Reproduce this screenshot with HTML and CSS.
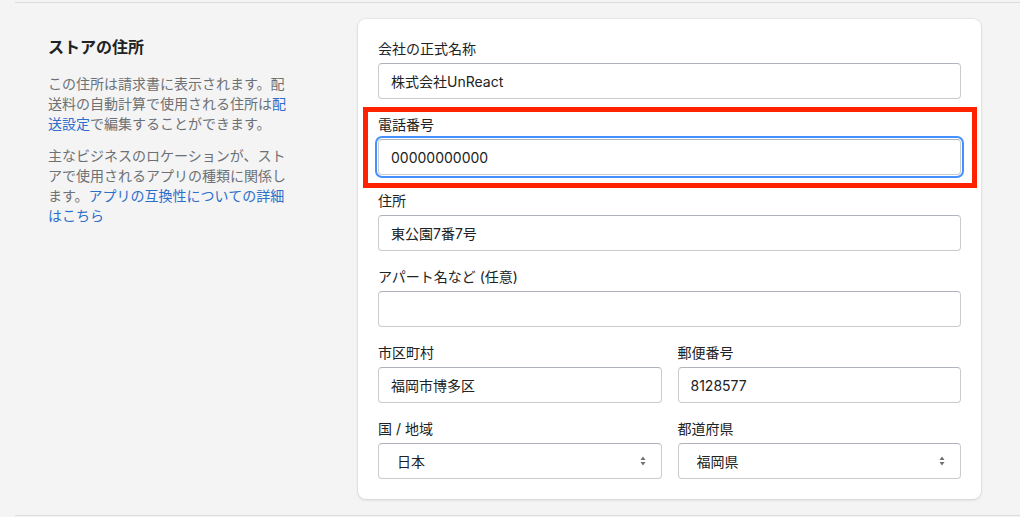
FILE: index.html
```
<!DOCTYPE html>
<html lang="ja">
<head>
    <meta charset="UTF-8">
    <meta name="viewport" content="width=device-width, initial-scale=1.0">
    <title>ストアの住所</title>
    <link rel="stylesheet" href="styles.css">
</head>
<body>
    <div class="section">
        <div class="annotation">
            <h2 class="heading">ストアの住所</h2>
            <p>この住所は請求書に表示されます。配送料の自動計算で使用される住所は<a href="#">配送設定</a>で編集することができます。</p>
            <p>主なビジネスのロケーションが、ストアで使用されるアプリの種類に関係します。<a href="#">アプリの互換性についての詳細はこちら</a></p>
        </div>

        <div class="card">
            <div class="field">
                <label>会社の正式名称</label>
                <input class="input" type="text" value="株式会社UnReact">
            </div>
            <div class="field highlight">
                <label>電話番号</label>
                <input class="input focused" type="text" value="00000000000">
            </div>
            <div class="field">
                <label>住所</label>
                <input class="input" type="text" value="東公園7番7号">
            </div>
            <div class="field">
                <label>アパート名など (任意)</label>
                <input class="input" type="text" value="">
            </div>
            <div class="row">
                <div class="field">
                    <label>市区町村</label>
                    <input class="input" type="text" value="福岡市博多区">
                </div>
                <div class="field">
                    <label>郵便番号</label>
                    <input class="input" type="text" value="8128577">
                </div>
            </div>
            <div class="row">
                <div class="field">
                    <label>国 / 地域</label>
                    <div class="select-wrap">
                        <select class="select">
                            <option>日本</option>
                        </select>
                        <svg class="caret" width="8" height="12" viewBox="0 0 8 12"><path d="M4 1.5 L6.5 5 H1.5 Z M4 10.5 L1.5 7 H6.5 Z" fill="#6d7175"/></svg>
                    </div>
                </div>
                <div class="field">
                    <label>都道府県</label>
                    <div class="select-wrap">
                        <select class="select">
                            <option>福岡県</option>
                        </select>
                        <svg class="caret" width="8" height="12" viewBox="0 0 8 12"><path d="M4 1.5 L6.5 5 H1.5 Z M4 10.5 L1.5 7 H6.5 Z" fill="#6d7175"/></svg>
                    </div>
                </div>
            </div>
        </div>
    </div>
</body>
</html>
```

FILE: styles.css
```
body {
    margin: 0;
    padding: 2px 0 0;
    background-color: #f4f4f4;
    font-family: Inter, "Noto Sans CJK JP", sans-serif;
    font-size: 14px;
    color: #202223;
    overflow: hidden;
}

.section {
    margin-left: 15px;
    padding: 16px 39px 16px 33px;
    border-top: 1px solid #dcdcdc;
    border-bottom: 1px solid #dcdcdc;
    display: grid;
    grid-template-columns: 245px 1fr;
    column-gap: 65px;
}

.annotation {
    padding-top: 16px;
}

.heading {
    margin: 0 0 15px;
    font-size: 16px;
    font-weight: 700;
    line-height: 24px;
}

.annotation p {
    margin: 0 0 12px;
    line-height: 20px;
    color: #6d7175;
}

.annotation a {
    color: #2c6ecb;
    text-decoration: none;
}

.card {
    background: white;
    border-radius: 8px;
    box-shadow: 0 0 0 1px rgba(63, 63, 68, 0.05), 0 1px 3px rgba(63, 63, 68, 0.15);
    padding: 20px;
    display: flex;
    flex-direction: column;
    gap: 16px;
}

.row {
    display: grid;
    grid-template-columns: 1fr 1fr;
    column-gap: 16px;
}

.field {
    display: flex;
    flex-direction: column;
    gap: 4px;
}

.field label {
    line-height: 20px;
}

.highlight {
    position: relative;
}

/* 赤い枠 (注釈) */
.highlight::after {
    content: "";
    position: absolute;
    left: -15px;
    right: -16px;
    top: -8px;
    bottom: -13px;
    border: 5px solid #ff2200;
    pointer-events: none;
}

.input,
.select {
    box-sizing: border-box;
    height: 36px;
    width: 100%;
    border: 1px solid #c9cccf;
    border-top-color: #aeb4b9;
    border-radius: 4px;
    background: white;
    font-family: inherit;
    font-size: 14px;
    color: #202223;
    padding: 0 12px;
    margin: 0;
}

.input.focused {
    outline: 2px solid #458fff;
    outline-offset: 1px;
}

.select-wrap {
    position: relative;
}

.select {
    appearance: none;
    -webkit-appearance: none;
    padding-left: 18px;
}

.caret {
    position: absolute;
    right: 15px;
    top: 12px;
}
```
